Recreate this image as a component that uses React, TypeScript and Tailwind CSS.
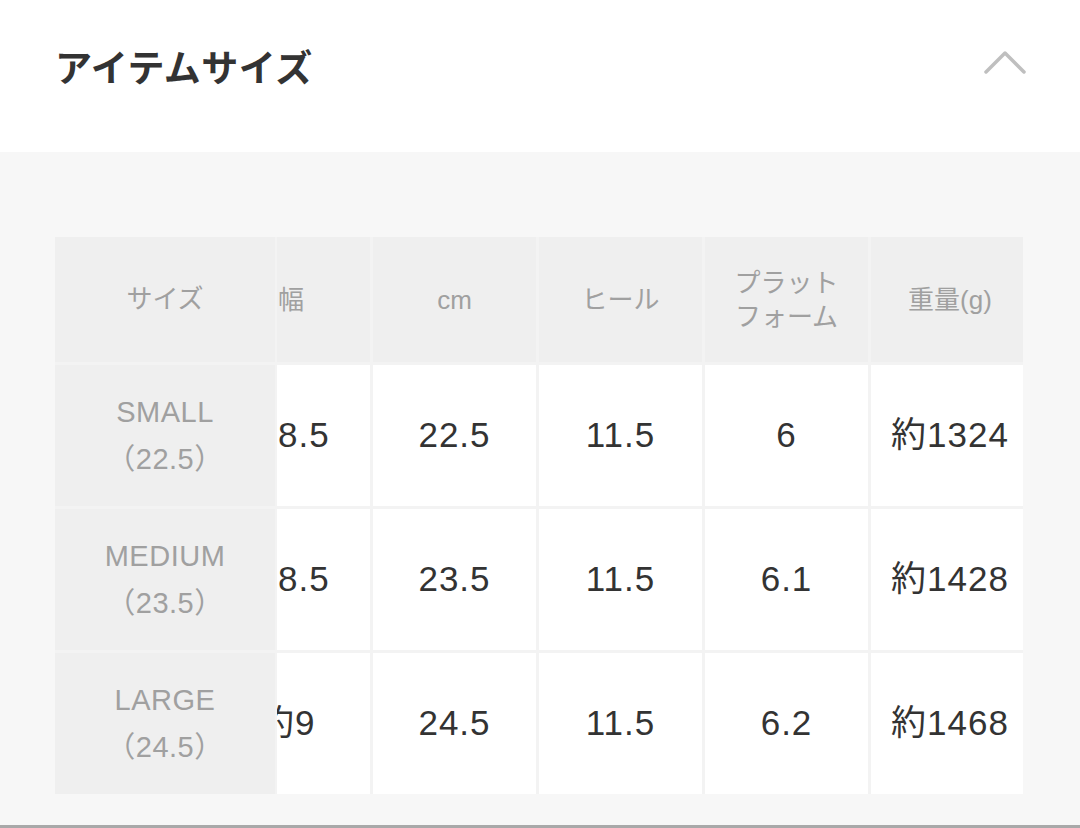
import React from "react";

const font = { fontFamily: '"Liberation Sans", "Noto Sans CJK JP", sans-serif' };

const stickyRows = [
  ["SMALL", "（22.5）"],
  ["MEDIUM", "（23.5）"],
  ["LARGE", "（24.5）"],
];

const bodyRows = [
  ["8.5", "22.5", "11.5", "6", "約1324"],
  ["8.5", "23.5", "11.5", "6.1", "約1428"],
  ["約9", "24.5", "11.5", "6.2", "約1468"],
];

const widths = ["w-[163px]", "w-[163px]", "w-[163px]", "w-[163px]", "w-[158px]"];

export default function App() {
  return (
    <div className="w-[1080px] h-[828px] bg-white flex flex-col overflow-hidden" style={font}>
      <div className="h-[152px] shrink-0 flex items-center justify-between pl-[55px] pr-[53px] pb-[18px]">
        <h2
          className="text-[37px] font-bold text-[#333333] tracking-[0.5px]"
          style={{ fontFamily: '"Noto Sans CJK JP", sans-serif' }}
        >
          アイテムサイズ
        </h2>
        <svg width="44" height="26" viewBox="0 0 44 26" className="mb-[10px]">
          <polyline
            points="3,23 22,4 41,23"
            fill="none"
            stroke="#bfbfbf"
            strokeWidth="3.5"
            strokeLinecap="round"
            strokeLinejoin="round"
          />
        </svg>
      </div>
      <div className="flex-1 bg-[#f7f7f7] pt-[85px] px-[55px] border-b-[3px] border-[#a9a9a9]">
        <div className="flex w-[968px] bg-[#f3f3f3] gap-[2px]">
          <div className="w-[220px] flex flex-col gap-[3px] shrink-0">
            <div className="h-[125px] bg-[#efefef] flex items-center justify-center text-[26px] text-[#a0a0a0]">
              サイズ
            </div>
            {stickyRows.map((r) => (
              <div
                key={r[0]}
                className="h-[141px] bg-[#efefef] flex flex-col items-center justify-center text-[29px] leading-[47px] text-[#a0a0a0] tracking-[0.5px]"
              >
                <span>{r[0]}</span>
                <span>{r[1]}</span>
              </div>
            ))}
          </div>
          <div className="flex-1 overflow-hidden">
            <div className="flex flex-col gap-[3px] ml-[-70px]">
              <div className="flex gap-[3px] h-[125px]">
                {["幅", "cm", "ヒール", "プラット\nフォーム", "重量(g)"].map((h, i) => (
                  <div
                    key={h}
                    className={`${widths[i]} shrink-0 bg-[#efefef] flex items-center justify-center text-center whitespace-pre-line text-[26px] leading-[34px] text-[#a0a0a0] ${
                      i === 0 ? "pl-[5px]" : ""
                    }`}
                  >
                    {h}
                  </div>
                ))}
              </div>
              {bodyRows.map((row, ri) => (
                <div key={ri} className="flex gap-[3px] h-[141px]">
                  {row.map((c, i) =>
                    i === 0 ? (
                      <div
                        key={i}
                        className={`${widths[i]} shrink-0 bg-white flex items-center justify-start text-[35px] tracking-[1px] text-[#333333] ${
                          c === "約9" ? "pl-[52px]" : "pl-[71px]"
                        }`}
                      >
                        {c}
                      </div>
                    ) : (
                      <div
                        key={i}
                        className={`${widths[i]} shrink-0 bg-white flex items-center justify-center text-[35px] tracking-[1px] text-[#333333]`}
                      >
                        {c}
                      </div>
                    )
                  )}
                </div>
              ))}
            </div>
          </div>
        </div>
      </div>
    </div>
  );
}
